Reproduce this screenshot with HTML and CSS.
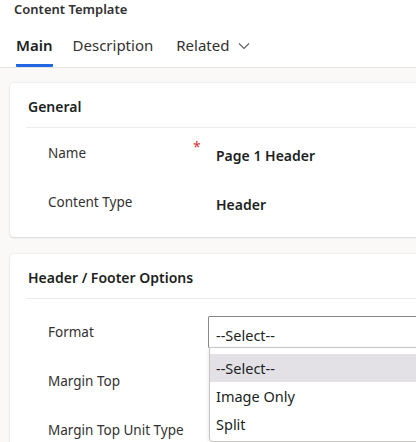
FILE: index.html
```html
<!DOCTYPE html>
<html>
<head>
<meta charset="utf-8">
<link rel="stylesheet" href="styles.css">
</head>
<body>
<div class="page">
  <header class="top">
    <div class="title">Content Template</div>
    <nav class="tabs">
      <div class="tab active">Main</div>
      <div class="tab">Description</div>
      <div class="tab">Related <svg class="chev" width="12" height="8" viewBox="0 0 12 8"><path d="M1 1.5 L6 6.5 L11 1.5" fill="none" stroke="#605e5c" stroke-width="1.1"/></svg></div>
    </nav>
  </header>
  <main class="content">
    <section class="card">
      <h2 class="card-title">General</h2>
      <div class="rows rows-general">
        <div class="row">
          <div class="label">Name</div>
          <div class="req">*</div>
          <div class="value">Page 1 Header</div>
        </div>
        <div class="row">
          <div class="label">Content Type</div>
          <div class="req"></div>
          <div class="value">Header</div>
        </div>
      </div>
    </section>
    <section class="card">
      <h2 class="card-title">Header / Footer Options</h2>
      <div class="rows rows-options">
        <div class="row">
          <div class="label">Format</div>
          <div class="req"></div>
          <div class="select-wrap">
            <div class="select">--Select--</div>
            <ul class="dropdown">
              <li class="opt selected">--Select--</li>
              <li class="opt">Image Only</li>
              <li class="opt">Split</li>
            </ul>
          </div>
        </div>
        <div class="row">
          <div class="label">Margin Top</div>
          <div class="req"></div>
          <div class="value"></div>
        </div>
        <div class="row">
          <div class="label">Margin Top Unit Type</div>
          <div class="req"></div>
          <div class="value"></div>
        </div>
      </div>
    </section>
  </main>
</div>
</body>
</html>
```
FILE: styles.css
```css
html, body {
  margin: 0;
  padding: 0;
  background: #faf9f8;
  overflow: hidden;
}
body {
  font-family: "Noto Sans", "Open Sans", sans-serif;
  color: #323130;
  width: 416px;
  height: 442px;
}
.page {
  width: 416px;
  height: 442px;
  overflow: hidden;
}
.top {
  background: #ffffff;
  border-bottom: 1px solid #e6e4e2;
  height: 67px;
  box-sizing: content-box;
}
.title {
  font-size: 13px;
  font-weight: 600;
  line-height: 18px;
  padding: 0 0 0 14px;
  color: #323130;
}
.tabs {
  display: flex;
  margin-top: 17px;
  padding-left: 16px;
  gap: 20px;
}
.tab {
  font-size: 15px;
  line-height: 20px;
  height: 32px;
  box-sizing: border-box;
  color: #323130;
  display: flex;
  align-items: flex-start;
  gap: 9px;
}
.tab.active {
  font-weight: 600;
  color: #201f1e;
  border-bottom: 3px solid #2266e3;
  border-radius: 0 0 1px 1px;
}
.tab + .tab + .tab {
  margin-left: 3px;
}
.chev {
  margin-top: 7px;
}
.content {
  padding: 15px 0 0 10px;
  display: flex;
  flex-direction: column;
  gap: 17px;
}
.card {
  background: #ffffff;
  width: 440px;
  border-radius: 4px;
  box-shadow: 0 0 2px rgba(0,0,0,0.12), 0 1px 2px rgba(0,0,0,0.10);
  padding: 0 0 19px 16px;
  box-sizing: border-box;
}
.card-title {
  margin: 0;
  font-size: 14px;
  font-weight: 600;
  line-height: 20px;
  padding: 14px 0 10px 2px;
  border-bottom: 1px solid #edebe9;
  color: #201f1e;
}
.rows {
  display: flex;
  flex-direction: column;
  gap: 17px;
}
.rows-general {
  padding-top: 9px;
}
.rows-options {
  padding-top: 17px;
}
.row {
  display: grid;
  grid-template-columns: 145px 15px 1fr;
  height: 32px;
  align-items: center;
  padding-left: 22px;
}
.label {
  font-size: 13.5px;
  line-height: 20px;
  color: #323130;
}
.req {
  color: #d13438;
  font-size: 14px;
  line-height: 14px;
  align-self: start;
  padding-top: 3px;
}
.value {
  font-size: 14px;
  font-weight: 600;
  color: #201f1e;
  padding-left: 8px;
  margin-top: 4px;
}
.select-wrap {
  position: relative;
  height: 32px;
}
.select {
  height: 32px;
  box-sizing: border-box;
  border: 1px solid #8a8886;
  border-radius: 1px;
  font-size: 14.5px;
  line-height: 20px;
  padding: 8px 0 0 7px;
  color: #201f1e;
  background: #fff;
}
.dropdown {
  position: absolute;
  left: 1px;
  top: 31px;
  width: 260px;
  margin: 0;
  padding: 6px 0 3px 0;
  list-style: none;
  background: #ffffff;
  border: 1px solid #c8c6c4;
  border-radius: 0 0 0 4px;
  box-shadow: 0 2px 4px rgba(0,0,0,0.12);
  z-index: 2;
}
.opt {
  height: 28px;
  font-size: 14.5px;
  line-height: 28px;
  padding-left: 6px;
  color: #201f1e;
}
.opt.selected {
  background: #e3e1e6;
}
```
